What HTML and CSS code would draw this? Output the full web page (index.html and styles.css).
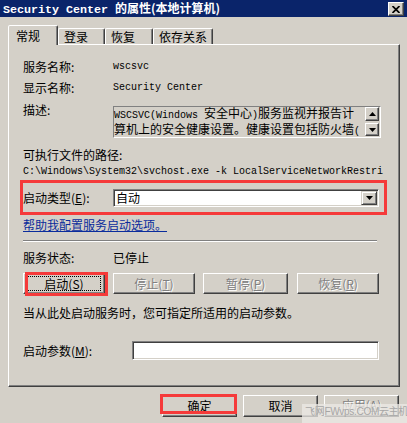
FILE: index.html
```html
<!DOCTYPE html>
<html>
<head>
<meta charset="utf-8">
<link rel="stylesheet" href="styles.css">
</head>
<body>
<div class="titlebar">
  <div class="title"><span class="tm">Security Center</span>的属性(本地计算机)</div>
  <div class="close"><svg width="8" height="7" viewBox="0 0 8 7"><path d="M0.5 0 L7.5 7 M7.5 0 L0.5 7" stroke="#000" stroke-width="1.7"/></svg></div>
</div>
<div class="tabs">
  <div class="tab sel w1">常规</div>
  <div class="tab w2">登录</div>
  <div class="tab w3">恢复</div>
  <div class="tab w4">依存关系</div>
</div>
<div class="panel">
  <div class="row r1"><span class="lbl">服务名称:</span><span class="m">wscsvc</span></div>
  <div class="row r2"><span class="lbl">显示名称:</span><span class="m">Security Center</span></div>
  <div class="row desc">
    <span class="lbl up">描述:</span>
    <div class="descbox">
      <div class="desctext"><span class="m">WSCSVC(Windows </span>安全中心<span class="m">)</span>服务监视并报告计<br>算机上的安全健康设置。健康设置包括防火墙<span class="m">(</span></div>
      <div class="scroll">
        <div class="sbtn"><svg width="7" height="4" viewBox="0 0 7 4"><path d="M3.5 0 L7 4 L0 4 Z" fill="#000"/></svg></div>
        <div class="sbtn dn"><svg width="7" height="4" viewBox="0 0 7 4"><path d="M0 0 L7 0 L3.5 4 Z" fill="#000"/></svg></div>
      </div>
    </div>
  </div>
  <div class="row r4">可执行文件的路径:</div>
  <div class="row r5"><span class="m">C:\Windows\System32\svchost.exe -k LocalServiceNetworkRestri</span></div>
  <div class="redrow">
    <span class="lbl">启动类型(<u>E</u>):</span>
    <div class="combo">
      <span class="cval">自动</span>
      <div class="cbtn"><svg width="7" height="4" viewBox="0 0 7 4"><path d="M0 0 L7 0 L3.5 4 Z" fill="#000"/></svg></div>
    </div>
  </div>
  <div class="row link">帮助我配置服务启动选项。</div>
  <div class="sep"></div>
  <div class="row r8"><span class="lbl">服务状态:</span>已停止</div>
  <div class="btnrow">
    <div class="btn b1"><span class="focus">启动(<u>S</u>)</span><div class="hl hl1"></div></div>
    <div class="btn b2 dis">停止(<u>T</u>)</div>
    <div class="btn b3 dis">暂停(<u>P</u>)</div>
    <div class="btn b4 dis">恢复(<u>R</u>)</div>
  </div>
  <div class="row hint">当从此处启动服务时，您可指定所适用的启动参数。</div>
  <div class="row params"><span class="lbl wide">启动参数(<u>M</u>):</span><div class="field"></div></div>
</div>
<div class="footer">
  <div class="btn fb">确定<div class="hl hl2"></div></div>
  <div class="btn fb">取消</div>
  <div class="btn fb dis apply">应用(<u>A</u>)</div>
</div>
<div class="wm">飞网FWvps.COM云主机</div>
</body>
</html>
```

FILE: styles.css
```css
* { box-sizing: border-box; }
html, body { margin: 0; padding: 0; }
body {
  width: 407px;
  height: 423px;
  overflow: hidden;
  background: #d4d0c8;
  font-family: "Noto Sans CJK SC", "Noto Sans", sans-serif;
  font-size: 12px;
  line-height: 16px;
  color: #000;
  position: relative;
}
u { text-decoration: underline; }
.m {
  font-family: "Liberation Mono", "DejaVu Sans Mono", monospace;
  font-size: 10px;
}
.titlebar {
  height: 17px;
  background: #0a246a;
  display: flex;
  align-items: center;
  justify-content: space-between;
  padding: 0 3px;
}
.title {
  color: #fff;
  font-weight: bold;
  font-size: 12px;
  line-height: 16px;
  white-space: nowrap;
}
.tm {
  font-family: "Liberation Mono", monospace;
  font-size: 11.67px;
  font-weight: bold;
  margin-right: 7px;
}
.close {
  width: 16px;
  height: 14px;
  margin-top: 1px;
  background: #d4d0c8;
  border: 1px solid;
  border-color: #fff #404040 #404040 #fff;
  box-shadow: inset -1px -1px #808080;
  display: flex;
  align-items: center;
  justify-content: center;
}
.tabs {
  display: flex;
  align-items: flex-end;
  height: 19px;
  margin-top: 8px;
  padding-left: 8px;
  position: relative;
  z-index: 1;
}
.tab {
  height: 16px;
  border: 1px solid;
  border-bottom: none;
  border-color: #fff #404040 transparent #fff;
  box-shadow: inset -1px 0 #808080;
  border-radius: 2px 2px 0 0;
  padding-left: 5px;
  line-height: 15px;
  white-space: nowrap;
}
.tab.sel {
  height: 20px;
  margin-bottom: -1px;
  background: #d4d0c8;
  padding-left: 7px;
  line-height: 19px;
}
.w1 { width: 50px; }
.w2 { width: 47px; }
.w3 { width: 48px; }
.w4 { width: 60px; }
.panel {
  margin-left: 8px;
  width: 392px;
  height: 343px;
  border: 1px solid;
  border-color: #fff #404040 #404040 #fff;
  box-shadow: inset -1px -1px #808080;
  padding: 14px 0 0 14px;
}
.row {
  display: flex;
  align-items: center;
  height: 16px;
  white-space: nowrap;
}
.lbl { width: 90px; flex: none; }
.lbl.wide { width: 109px; }
.r2 { margin-top: 5px; }
.desc {
  margin-top: 10px;
  height: 32px;
  align-items: flex-start;
}
.lbl.up { margin-top: -4px; }
.descbox {
  width: 268px;
  height: 32px;
  border: 1px solid;
  border-color: #808080 #fff #fff #808080;
  display: flex;
  justify-content: space-between;
}
.desctext {
  line-height: 13px;
  margin-top: -1px;
  white-space: nowrap;
  width: 250px;
  flex: none;
}
.scroll {
  width: 14px;
  margin-right: 1px;
  display: flex;
  flex-direction: column;
  justify-content: space-between;
  padding-bottom: 1px;
}
.sbtn {
  height: 14px;
  background: #d4d0c8;
  border: 1px solid;
  border-color: #fff #404040 #404040 #fff;
  box-shadow: inset -1px -1px #808080;
  display: flex;
  align-items: center;
  justify-content: center;
}
.sbtn.dn { height: 13px; }
.r4 { margin-top: 9px; }
.r5 { margin-top: 1px; }
.redrow {
  margin-left: -3px;
  width: 367px;
  height: 35px;
  border: 3px solid #f53a3a;
  display: flex;
  align-items: center;
}
.combo {
  width: 266px;
  height: 18px;
  background: #fff;
  border: 1px solid;
  border-color: #808080 #fff #fff #808080;
  box-shadow: inset 1px 1px #404040, inset -1px -1px #d4d0c8;
  display: flex;
  align-items: center;
  justify-content: space-between;
  padding: 1px;
}
.cval { padding-left: 1px; line-height: 14px; }
.cbtn {
  width: 16px;
  height: 14px;
  background: #d4d0c8;
  border: 1px solid;
  border-color: #d4d0c8 #404040 #404040 #d4d0c8;
  box-shadow: inset 1px 1px #fff, inset -1px -1px #808080;
  display: flex;
  align-items: center;
  justify-content: center;
}
.link {
  margin-top: 2px;
  color: #0a2c9c;
  text-decoration: underline;
  width: max-content;
}
.sep {
  margin-top: 7px;
  width: 354px;
  height: 2px;
  border-top: 1px solid #808080;
  border-bottom: 1px solid #fff;
}
.r8 { margin-top: 8px; }
.btnrow {
  margin-top: 7px;
  display: flex;
  height: 21px;
}
.btn {
  position: relative;
  height: 21px;
  background: #d4d0c8;
  border: 1px solid;
  border-color: #fff #404040 #404040 #fff;
  box-shadow: inset -1px -1px #808080;
  display: flex;
  align-items: center;
  justify-content: center;
  white-space: nowrap;
}
.b1 { width: 82px; }
.b2 { width: 82px; margin-left: 8px; }
.b3 { width: 85px; margin-left: 8px; }
.b4 { width: 82px; margin-left: 9px; }
.focus {
  display: flex;
  align-items: center;
  justify-content: center;
  width: 72px;
  height: 13px;
  outline: 1px dotted #000;
  line-height: 13px;
}
.dis {
  color: #808080;
  text-shadow: 1px 1px 0 #fff;
}
.hl {
  position: absolute;
  border: 3px solid #f53a3a;
  pointer-events: none;
}
.hl1 { left: 1px; top: -2px; width: 83px; height: 24px; }
.hl2 { left: -3px; top: -2px; width: 77px; height: 20px; }
.hint { margin-top: 11px; }
.params { margin-top: 20px; height: 19px; }
.field {
  width: 247px;
  height: 19px;
  background: #fff;
  border: 1px solid;
  border-color: #808080 #fff #fff #808080;
  box-shadow: inset 1px 1px #404040, inset -1px -1px #d4d0c8;
}
.footer {
  margin-top: 8px;
  padding-left: 162px;
  display: flex;
  gap: 6px;
}
.fb { width: 75px; height: 22px; }
.apply { align-items: flex-start; padding-top: 1px; }
.wm {
  position: absolute;
  left: 302px;
  top: 404px;
  width: 105px;
  height: 19px;
  padding-left: 3px;
  background: rgba(236, 234, 230, 0.75);
  color: #a6a6a6;
  font-family: "Liberation Sans", "Noto Sans CJK SC", sans-serif;
  font-size: 10px;
  line-height: 16px;
  white-space: nowrap;
  letter-spacing: -0.3px;
}
```
